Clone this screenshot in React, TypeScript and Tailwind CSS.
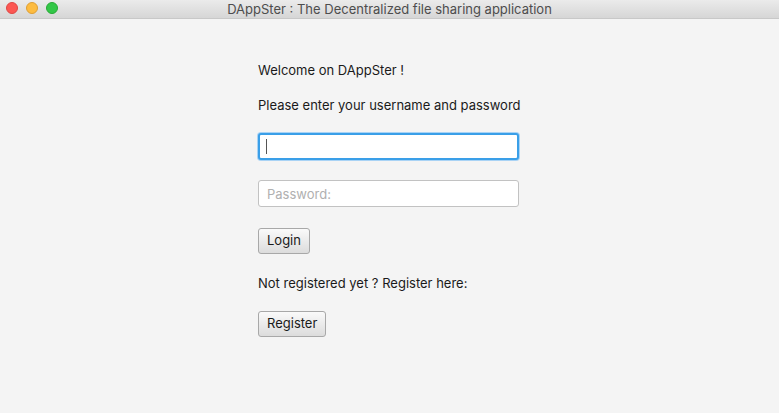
export default function App() {
  return (
    <div className="flex flex-col h-[413px] w-[779px] overflow-hidden bg-[#f4f4f4] text-[13px] text-[#1a1a1a] font-['Inter',sans-serif]">
      {/* Title bar */}
      <div className="relative flex items-center justify-center h-[19px] shrink-0 border-b border-[#c8c8c8] bg-gradient-to-b from-[#ebebeb] to-[#d6d6d6]">
        <div className="absolute left-[6px] top-[2px] flex items-center gap-[8px]">
          <span className="block w-[12px] h-[12px] rounded-full bg-[#fc5753] border border-[#df4744]" />
          <span className="block w-[12px] h-[12px] rounded-full bg-[#fdbc40] border border-[#de9f34]" />
          <span className="block w-[12px] h-[12px] rounded-full bg-[#33c748] border border-[#27aa35]" />
        </div>
        <span className="text-[13px] text-[#4d4d4d] leading-none">DAppSter : The Decentralized file sharing application</span>
      </div>

      {/* Form */}
      <div className="flex flex-col pl-[258px] pt-[42px]">
        <p className="leading-[18px]">Welcome on DAppSter !</p>
        <p className="mt-[17px] leading-[18px]">Please enter your username and password</p>
        <div className="mt-[19px] w-[261px] h-[27px] rounded-[3px] border-2 border-[#3a9fe8] bg-white flex items-center px-[6px] shadow-[0_0_0_1px_#a9d3f5]">
          <span className="block w-px h-[15px] bg-[#555]" />
        </div>
        <input
          placeholder="Password:"
          className="mt-[20px] w-[261px] h-[27px] rounded-[3px] border border-[#c2c2c2] bg-white px-[8px] text-[13px] placeholder:text-[#b0b0b0] outline-none"
        />
        <button className="mt-[21px] self-start h-[26px] px-[8px] rounded-[3px] border border-[#a8a8a8] bg-gradient-to-b from-[#fafafa] to-[#dcdcdc] text-[13px]">
          Login
        </button>
        <p className="mt-[20px] leading-[18px]">Not registered yet ? Register here:</p>
        <button className="mt-[19px] self-start h-[26px] px-[8px] rounded-[3px] border border-[#a8a8a8] bg-gradient-to-b from-[#fafafa] to-[#dcdcdc] text-[13px]">
          Register
        </button>
      </div>
    </div>
  )
}
